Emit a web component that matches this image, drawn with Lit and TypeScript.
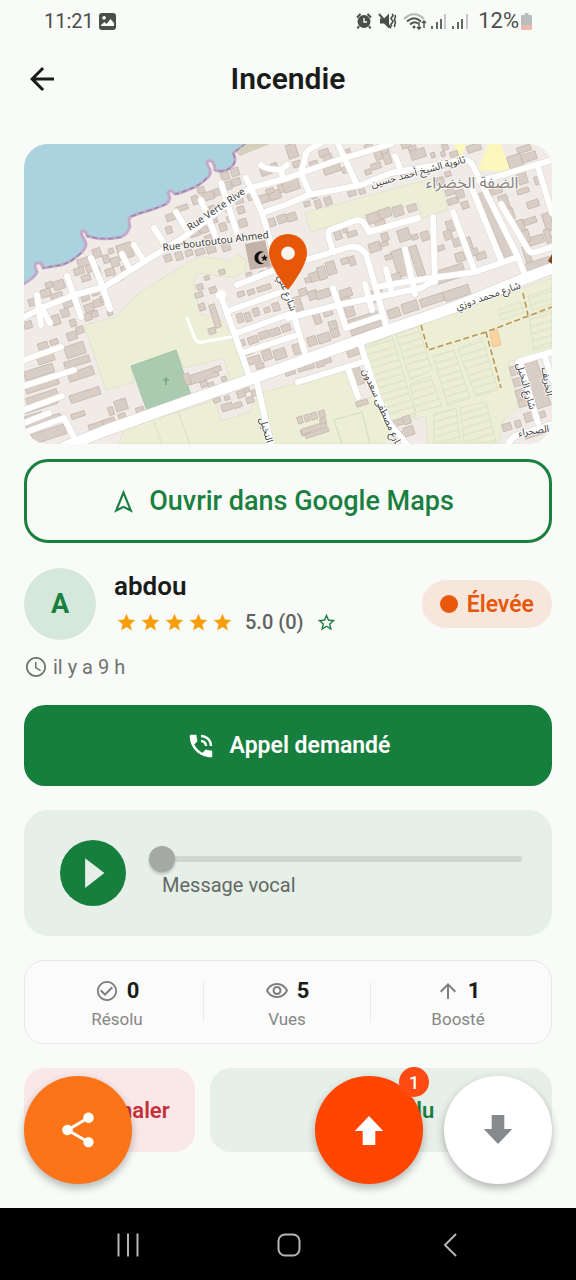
import { LitElement, html, css, svg } from "lit";
import { customElement, property } from "lit/decorators.js";

type Building = [cx: number, cy: number, w: number, h: number];

/* Single buildings: centre and size, all turned to the street grid. */
const buildings: Building[] = [
  // coast blocks
  [147, 73, 10, 7], [145, 86, 6, 7], [158, 64, 12, 5], [171, 56, 6, 9], [177, 46, 7, 6],
  [184, 52, 12, 8], [194, 48, 8, 7], [201, 32, 8, 8], [211, 28, 8, 8], [203, 42, 9, 8],
  [212, 38, 9, 7], [217, 66, 7, 7], [219, 79, 8, 8], [204, 63, 7, 9], [206, 75, 6, 6],
  [187, 66, 8, 7], [190, 75, 6, 8], [199, 83, 7, 8], [188, 64, 5, 5], [157, 98, 9, 5],
  [171, 90, 10, 5], [180, 86, 8, 6], [144, 114, 7, 7], [155, 112, 7, 8], [165, 109, 7, 6],
  [176, 108, 9, 6], [187, 105, 9, 8], [202, 103, 8, 8], [215, 56, 8, 7], [184, 94, 7, 5],
  [242, 27, 11, 8], [250, 21, 6, 4], [227, 51, 8, 10], [239, 55, 12, 8], [251, 51, 11, 9],
  [259, 44, 9, 8], [246, 47, 8, 5], [246, 79, 11, 8], [258, 75, 9, 8], [268, 73, 9, 8],
  [101, 107, 15, 15], [87, 107, 5, 5], [73, 109, 8, 9], [82, 115, 6, 8], [60, 118, 13, 8],
  [55, 127, 10, 7], [66, 124, 8, 8], [73, 128, 7, 9], [62, 134, 9, 6], [91, 118, 8, 9],
  [100, 125, 6, 6], [86, 128, 9, 7], [94, 134, 8, 6], [35, 141, 11, 9], [22, 149, 10, 8],
  [33, 153, 12, 8], [44, 160, 9, 7], [9, 158, 9, 7], [6, 170, 8, 6], [32, 176, 8, 10],
  [41, 169, 8, 8], [65, 164, 9, 8], [74, 159, 9, 7], [64, 173, 7, 7], [71, 170, 6, 6],
  [86, 169, 5, 5], [49, 179, 6, 7], [56, 186, 7, 7], [48, 192, 10, 8], [4, 181, 8, 7],
  [61, 153, 8, 8], [71, 148, 7, 7], [25, 141, 7, 6], [79, 155, 6, 6],
  // western terraces
  [19, 202, 10, 7], [30, 198, 8, 5], [22, 215, 17, 7], [51, 206, 20, 12], [53, 218, 26, 7],
  [57, 230, 26, 9], [61, 251, 31, 8], [54, 271, 14, 5], [15, 228, 30, 9], [18, 241, 34, 8],
  [18, 253, 32, 7], [17, 262, 34, 5], [20, 279, 36, 9], [25, 290, 34, 10], [10, 273, 18, 6],
  [97, 261, 12, 11], [87, 267, 5, 8], [98, 272, 7, 5], [116, 266, 8, 6], [72, 282, 15, 6],
  [85, 278, 12, 7],
  // park side
  [179, 232, 31, 9], [193, 225, 8, 5], [163, 235, 6, 11], [180, 240, 7, 6], [187, 241, 6, 5],
  [200, 235, 5, 5], [175, 151, 8, 5], [178, 163, 6, 7], [188, 187, 7, 6], [191, 172, 6, 24],
  [183, 134, 5, 4], [198, 128, 6, 5], [189, 146, 7, 6], [176, 143, 6, 6],
  [217, 150, 7, 5], [227, 148, 7, 5], [240, 144, 14, 5], [216, 174, 6, 9], [224, 173, 6, 9],
  [232, 168, 6, 8], [252, 163, 7, 8], [243, 166, 6, 5], [218, 199, 6, 6], [229, 196, 10, 7],
  [240, 191, 10, 7], [251, 188, 10, 7], [262, 184, 9, 7], [230, 216, 13, 7], [243, 211, 9, 10],
  [256, 210, 12, 10], [225, 208, 8, 5], [236, 222, 8, 5], [273, 205, 8, 10], [268, 218, 10, 5],
  [193, 256, 7, 5], [203, 263, 11, 7], [214, 261, 8, 5], [217, 250, 8, 7], [226, 256, 7, 6],
  [230, 249, 5, 6], [223, 246, 5, 4], [203, 254, 5, 4],
  [225, 131, 6, 5], [238, 129, 6, 4], [248, 122, 9, 4],
  // northern streets
  [268, 7, 10, 14], [267, 41, 16, 12], [273, 20, 8, 6], [290, 21, 8, 8], [300, 9, 10, 7],
  [304, 15, 9, 9], [308, 25, 17, 8], [321, 26, 6, 6], [323, 8, 7, 5], [294, 60, 6, 8],
  [304, 57, 7, 8], [283, 60, 6, 5], [290, 52, 6, 5], [345, 4, 8, 8], [354, 10, 7, 12],
  [363, 14, 7, 12], [352, 22, 10, 6], [344, 28, 6, 5], [361, 6, 7, 6], [382, 1, 9, 6],
  [394, 10, 15, 9], [388, 4, 8, 4], [409, 11, 4, 5], [419, 10, 4, 5], [421, 3, 6, 6],
  [430, 10, 8, 5], [450, 4, 14, 7], [328, 49, 8, 6], [338, 47, 6, 6], [380, 28, 7, 5],
  [349, 74, 12, 10], [361, 69, 12, 9], [374, 67, 10, 10], [388, 64, 9, 7], [356, 79, 10, 5],
  [314, 91, 7, 9], [328, 90, 10, 5], [321, 86, 5, 5], [361, 93, 7, 8], [380, 91, 12, 12],
  [401, 92, 8, 9], [391, 93, 6, 5], [351, 103, 12, 9], [360, 100, 8, 4], [365, 113, 8, 5],
  [376, 119, 11, 27], [393, 117, 8, 31], [371, 136, 13, 12], [417, 104, 7, 5],
  [290, 133, 9, 9], [298, 129, 8, 13], [307, 124, 9, 13], [321, 117, 8, 6], [328, 117, 6, 9],
  [284, 136, 6, 5], [425, 130, 32, 13], [427, 82, 9, 11], [424, 91, 8, 9], [436, 113, 9, 9],
  [434, 98, 10, 8], [429, 57, 11, 6], [426, 48, 9, 6], [441, 61, 7, 7], [416, 37, 8, 7],
  [424, 30, 6, 5], [444, 99, 7, 11], [457, 112, 10, 7], [450, 108, 8, 7], [436, 50, 8, 8],
  [472, 47, 12, 6], [480, 58, 9, 14], [486, 70, 8, 11], [491, 17, 14, 12],
  [505, 13, 15, 8], [500, 5, 14, 6], [497, 86, 9, 20], [503, 110, 6, 16], [513, 121, 28, 9],
  [498, 33, 9, 14], [499, 47, 12, 5], [509, 60, 12, 7], [515, 36, 9, 8],
  [506, 77, 13, 6], [524, 78, 8, 18], [512, 96, 16, 8], [502, 92, 7, 12], [524, 92, 6, 14],
  [433, 149, 26, 10], [408, 156, 24, 8], [386, 163, 16, 10], [370, 169, 12, 9],
  // south of the mosque
  [273, 160, 9, 14], [289, 151, 9, 9], [299, 150, 14, 8], [279, 148, 8, 7], [293, 174, 7, 12],
  [304, 169, 9, 6], [309, 181, 8, 8], [288, 197, 9, 9], [300, 194, 12, 9], [311, 189, 8, 8],
  [324, 162, 9, 22], [322, 149, 12, 8], [352, 152, 9, 12], [338, 175, 33, 6], [343, 184, 33, 6],
  [354, 144, 7, 8], [329, 208, 12, 8], [304, 216, 6, 6], [296, 219, 8, 8], [286, 222, 8, 6],
  [277, 223, 7, 9], [266, 228, 10, 6], [333, 232, 10, 18], [338, 259, 12, 5],
  [276, 276, 5, 7], [283, 274, 5, 7], [290, 272, 6, 7], [298, 270, 6, 7], [281, 288, 8, 6],
  [290, 284, 26, 5], [293, 289, 24, 4], [299, 277, 6, 5],
  [385, 287, 10, 9], [376, 278, 14, 6], [383, 276, 7, 8], [374, 291, 10, 5],
  [492, 226, 12, 9], [494, 238, 9, 8], [497, 250, 10, 10], [499, 259, 9, 7], [513, 240, 14, 48],
  [483, 283, 9, 7], [494, 280, 6, 7], [505, 273, 9, 9], [517, 271, 9, 6], [511, 289, 22, 6],
];

const minorRoads = [
  "M0 173 L20 163 L50 151 L80 143 L123 116 L160 93 L213 53 L227 44 L264 34 L277 29 L314 16 L367 0",
  "M222 34 L227 44 L238 69 L247 99 L262 146 L281 209",
  "M238 69 L264 60 L284 51 L337 41 L367 29 L441 16 Q446 16 449 22 L494 113 L502 134",
  "M314 0 L332 39", "M296 0 Q280 6 281 14 L277 29 L286 50", "M371 12 L377 27",
  "M429 68 L451 128", "M409 73 L411 138", "M447 42 L477 116", "M455 37 L471 33 L528 16",
  "M477 60 L503 104 Q506 110 512 108 L528 103", "M514 23 L528 69",
  "M394 74 L345 88 L340 79 Q336 75 330 77 L306 86 Q303 88 305 94 L309 108",
  "M270 120 L282 116 L325 103 Q336 101 342 110 L352 145 L362 181",
  "M352 143 L387 137 L451 128 L494 113", "M264 174 L314 161 L397 144 L411 136",
  "M381 105 L391 150", "M362 125 L367 145", "M309 144 L322 184 L357 172", "M341 140 L348 166",
  "M197 152 L225 231 L233 239 L247 300", "M207 166 L263 146", "M213 189 L268 169",
  "M218 209 L270 192", "M213 141 L258 123",
  "M0 216 L37 203", "M0 242 L50 226", "M0 266 L38 252", "M0 279 L25 269", "M2 288 L40 274 L50 293",
  "M13 151 L17 181", "M17 163 L26 179", "M43 132 L57 173", "M67 114 L78 141 L86 165",
  "M98 110 L105 124", "M110 101 L118 114", "M130 84 L141 101", "M152 68 L163 86",
  "M177 56 L192 93", "M197 39 L213 89", "M237 21 Q240 25 257 26 L263 21 M257 26 L259 34",
  "M336 199 L354 253 L366 280 L384 302", "M274 238 L339 218", "M324 224 L334 253",
  "M484 302 Q486 292 498 290 L528 280", "M494 218 L528 208", "M496 218 L514 279", "M521 213 L528 236",
];

const plots = [
  "M338 204 L368 192 L392 272 L362 280 Z",
  "M372 190 L394 183 L408 226 L386 236 Z",
  "M386 240 L406 232 L418 262 L392 268 Z",
  "M409 212 L430 206 L446 254 L424 262 Z",
  "M434 205 L458 194 L474 246 L452 252 Z",
  "M410 270 L432 264 L436 298 L410 298 Z",
  "M436 264 L462 258 L472 298 L440 298 Z",
  "M474 166 L496 158 L500 168 L478 176 Z",
  "M505 172 L528 166 L528 202 L510 206 Z",
  "M504 152 L528 144 L528 160 L508 166 Z",
];

@customElement("area-map")
export class AreaMap extends LitElement {
  static styles = css`
    :host { display: block; height: 300px; border-radius: 24px; overflow: hidden; background: #f2eeea; }
    svg { display: block; width: 100%; height: 100%; }
    .latin { font: 10px "Noto Sans", "DejaVu Sans", sans-serif; fill: #3c3c3c; }
    .arabic { font: 10px "Noto Sans Arabic", "DejaVu Sans", sans-serif; fill: #3c3c3c; }
    .district { font: 16px "Noto Sans Arabic", "DejaVu Sans", sans-serif; fill: #85827f; }
    .halo { paint-order: stroke; stroke: #ffffff; stroke-opacity: 0.7; stroke-width: 2px; }
  `;

  render() {
    return html`
      <svg viewBox="0 0 528 300" preserveAspectRatio="xMidYMid slice" role="img" aria-label="Carte">
        <defs>
          <pattern id="furrow" width="40" height="7" patternUnits="userSpaceOnUse" patternTransform="rotate(-17)">
            <path d="M0 1H40" stroke="#dadec6" stroke-width="1" />
          </pattern>
        </defs>
        <rect width="528" height="300" fill="#f0ebe6" />
        <g fill="#ecefd5" stroke="#dcdfc6" stroke-width=".7">
          <path d="M60 181 L92 173 L115 149 L160 121 Q172 113 183 113 L205 117 L213 110 L222 116 L222 126 L210 134 L173 129 L170 139 L176 170 L197 176 L208 190 L222 232 L206 236 L200 214 L160 224 L152 206 L107 222 L110 238 L82 246 Z" />
          <path d="M95 300 L100 285 L192 256 L197 277 L226 268 L234 250 L324 224 L334 258 L354 250 L384 300 Z" />
          <path d="M336 200 L528 134 L528 206 L484 218 L495 262 L480 276 L474 300 L404 300 L402 272 L364 282 L354 253 Z" />
          <path d="M281 69 L391 39 L416 34 L424 66 L397 74 L394 59 L330 76 L287 88 Z" />
        </g>
        <path d="M454 26 L464 0 L477 0 L487 28 Z M430 0 L442 0 L436 16 Z" fill="#fbf7bd" />
        <path d="M107 222 L152 206 L167 251 L123 267 Z" fill="#aacbaf" stroke="#98bd9f" stroke-width=".7" />
        <path d="M142 233 V241 M139 236 H145" stroke="#7aa386" stroke-width="1.5" />
        <g fill="url(#furrow)" stroke="#dadec6" stroke-width=".8">${plots.map((d) => svg`<path d=${d} />`)}</g>
        <path d="M130 277 L138 300 M154 268 L166 300" fill="none" stroke="#dcdfc6" />
        <path d="M310 276 L338 268 L346 300 M310 276 L318 300" fill="none" stroke="#d5dac0" />
        <path d="M466 189 L473 185 L477 201 L469 203 Z" fill="#fbd4a0" stroke="#eab981" stroke-width=".7" />
        <g fill="#d9cec6" stroke="#c6b8ae" stroke-width=".8">
          ${buildings.map(
            ([x, y, w, h]) =>
              svg`<rect x=${x - w / 2} y=${y - h / 2} width=${w} height=${h} transform="rotate(-18 ${x} ${y})" />`,
          )}
          <path d="M453 50 L461 48 L490 110 L481 114 Z" />
        </g>
        <g fill="none" stroke-linejoin="round" stroke-linecap="round">
          ${minorRoads.map((d) => svg`<path d=${d} stroke="#dcd6d2" stroke-width="7" />`)}
          <path d="M40 303 L83 286 L167 256 L230 234 L336 196 L431 163 L497 136 L532 123" stroke="#d5cfca" stroke-width="12" />
          ${minorRoads.map((d) => svg`<path d=${d} stroke="#ffffff" stroke-width="6" />`)}
          <path d="M163 174 L171 195 Q173 199 178 198 L207 193" stroke="#ffffff" stroke-width="3" />
          <path d="M40 303 L83 286 L167 256 L230 234 L336 196 L431 163 L497 136 L532 123" stroke="#ffffff" stroke-width="11" />
          <circle cx="197" cy="151" r="5" fill="#ffffff" />
        </g>
        <path d="M397 181 L404 206 L462 188 L528 163 M462 188 L477 244 M499 149 L504 171" fill="none" stroke="#bd9552" stroke-width="1.600" stroke-dasharray="6 3" />
        <path
          d="M-4 -4 H222 V0 L209 9 Q214 18 206 24 Q199 29 191 26 Q190 17 187 17 Q181 16 184 22 Q189 29 183 34 Q175 42 166 45 Q154 50 151 50 Q146 44 144 49 Q148 55 142 60 Q136 63 123 67 Q110 71 106 73 Q104 77 106 82 Q104 90 97 93 Q80 97 63 92 Q62 86 58 87 Q56 90 61 97 Q64 102 57 109 Q46 119 37 121 L19 124 Q18 118 13 119 Q9 121 13 128 Q12 133 -4 142 Z"
          fill="#aad3df" stroke="#c3a9cb" stroke-width="3" stroke-linejoin="round"
        />
        <path
          d="M222 0 L209 9 Q214 18 206 24 Q199 29 191 26 M183 34 Q175 42 166 45 Q154 50 151 50 M142 60 Q136 63 123 67 Q110 71 106 73 M97 93 Q80 97 63 92 M57 109 Q46 119 37 121 L19 124"
          fill="none" stroke="#8c85a8" stroke-width="1.200" stroke-dasharray="5 3"
        />
        <path d="M222 0 L212 8 L216 12 L246 0 Z" fill="#d3d0bb" />
        <path d="M221 100 L241 96 L247 122 L226 126 Z" fill="#c3b2a8" />
        <path d="M240 108 A6.5 6.5 0 1 0 240 119.500 A5.500 5.500 0 1 1 240 108 Z" fill="#111" />
        <path d="M240.500 110.500l1 2.200 2.400.3-1.800 1.600.5 2.400-2.100-1.200-2.100 1.200.5-2.400-1.800-1.600 2.400-.3z" fill="#111" />
        <path d="M528 110 L524 117 L528 120 Z" fill="#7a4a1f" />
        <text class="latin halo" transform="translate(166 87) rotate(-34)">Rue Verte Rive</text>
        <text class="latin halo" transform="translate(139 107) rotate(-7)">Rue boutoutou Ahmed</text>
        <text class="arabic halo" text-anchor="middle" transform="translate(395 31) rotate(-15)">ثانوية الشيخ أحمد حسين</text>
        <text class="district halo" text-anchor="middle" x="448" y="44">الضفة الخضراء</text>
        <text class="arabic halo" text-anchor="middle" transform="translate(465 155) rotate(-19)">شارع محمد دوزي</text>
        <text class="arabic halo" text-anchor="middle" transform="translate(260 150) rotate(70)">شارع علي</text>
        <text class="arabic halo" text-anchor="middle" transform="translate(239 287) rotate(74)">النخيل</text>
        <text class="arabic halo" text-anchor="middle" transform="translate(356 267) rotate(66)">شارع مصطفى سعدون</text>
        <text class="arabic halo" text-anchor="middle" transform="translate(499 243) rotate(74)">شارع النخيل</text>
        <text class="arabic halo" text-anchor="middle" transform="translate(520 238) rotate(80)">الخريف</text>
        <text class="arabic halo" text-anchor="middle" transform="translate(510 290) rotate(-8)">الصحراء</text>
        <path
          fill="#e65708"
          d="M264 90c-10.800 0-19 8.400-19 19 0 13.500 19 37 19 37s19-23.500 19-37c0-10.600-8.200-19-19-19z"
        />
        <circle cx="264" cy="109.300" r="6.800" fill="#f8f4f0" />
      </svg>
    `;
  }
}

const icons = {
  back: svg`<path d="M20 11H7.830l5.590-5.590L12 4l-8 8 8 8 1.410-1.410L7.830 13H20z"/>`,
  navigate: svg`<path fill="none" stroke="currentColor" stroke-width="1.900" stroke-linejoin="miter" d="M12 4 5.500 20 12 16.800l6.500 3.200z"/>`,
  star: svg`<path d="M12 17.270 18.180 21l-1.640-7.030L22 9.240l-7.190-.61L12 2 9.190 8.630 2 9.240l5.460 4.730L5.820 21z"/>`,
  starOutline: svg`<path d="m22 9.240-7.190-.62L12 2 9.190 8.630 2 9.240l5.460 4.730L5.820 21 12 17.270 18.180 21l-1.630-7.030zM12 15.400l-3.760 2.270 1-4.280-3.320-2.880 4.380-.38L12 6.100l1.710 4.040 4.380.38-3.320 2.880 1 4.280z"/>`,
  clock: svg`<path d="M11.990 2C6.470 2 2 6.480 2 12s4.470 10 9.990 10C17.520 22 22 17.520 22 12S17.520 2 11.990 2M12 20.300a8.300 8.300 0 1 1 0-16.600 8.300 8.300 0 0 1 0 16.600m.5-13.300H11v6l5.250 3.150.75-1.230-4.500-2.670z"/>`,
  phone: svg`<path d="M20 15.500c-1.250 0-2.450-.2-3.570-.57-.1-.03-.21-.05-.31-.05-.26 0-.51.1-.71.290l-2.200 2.200c-2.830-1.440-5.150-3.750-6.590-6.590l2.200-2.200c.28-.28.36-.67.25-1.020C8.700 6.450 8.500 5.250 8.500 4c0-.55-.45-1-1-1H4c-.55 0-1 .45-1 1 0 9.390 7.610 17 17 17 .55 0 1-.45 1-1v-3.500c0-.55-.45-1-1-1M19 12h2c0-4.970-4.030-9-9-9v2c3.870 0 7 3.130 7 7m-4 0h2c0-2.760-2.240-5-5-5v2c1.660 0 3 1.340 3 3"/>`,
  play: svg`<path d="M7.500 3.500v17l11-8.500z"/>`,
  check: svg`<path d="M16.590 7.580 10 14.170l-3.590-3.580L5 12l5 5 8-8zM12 2C6.480 2 2 6.480 2 12s4.480 10 10 10 10-4.480 10-10S17.520 2 12 2m0 18.300a8.300 8.300 0 1 1 0-16.600 8.300 8.300 0 0 1 0 16.600"/>`,
  eye: svg`<path d="M12 6c3.790 0 7.170 2.130 8.820 5.500C19.170 14.870 15.790 17 12 17s-7.170-2.130-8.820-5.500C4.830 8.130 8.210 6 12 6m0-2C7 4 2.730 7.110 1 11.500 2.730 15.890 7 19 12 19s9.270-3.110 11-7.500C21.270 7.110 17 4 12 4m0 5a2.500 2.500 0 0 1 0 5 2.500 2.500 0 0 1 0-5m0-2c-2.480 0-4.500 2.020-4.500 4.500S9.520 16 12 16s4.500-2.020 4.500-4.500S14.480 7 12 7"/>`,
  up: svg`<path d="m4 12 1.410 1.410L11 7.830V20h2V7.830l5.580 5.590L20 12l-8-8z"/>`,
  flag: svg`<path d="M14.400 6 14 4H5v17h2v-7h5.600l.4 2h7V6z"/>`,
  share: svg`<path d="M18 16.080c-.76 0-1.440.3-1.960.77L8.910 12.700c.05-.23.09-.46.09-.7s-.04-.47-.09-.7l7.050-4.110c.54.5 1.250.81 2.040.81 1.660 0 3-1.340 3-3s-1.340-3-3-3-3 1.340-3 3c0 .24.04.47.09.7L8.040 9.810C7.500 9.310 6.790 9 6 9c-1.660 0-3 1.340-3 3s1.340 3 3 3c.79 0 1.500-.31 2.040-.81l7.120 4.160c-.05.21-.08.43-.08.65 0 1.610 1.310 2.920 2.920 2.920s2.920-1.310 2.920-2.920-1.310-2.920-2.920-2.920"/>`,
  boost: svg`<path d="M12 2.600 2.500 12.600H7.800V22h8.400V12.600H21.500z"/>`,
  lower: svg`<path d="M12 21.400 2.500 11.400H7.800V2h8.400v9.400H21.500z"/>`,
};

@customElement("app-icon")
export class AppIcon extends LitElement {
  @property() name: keyof typeof icons = "back";
  static styles = css`
    :host { display: inline-flex; flex: none; width: 24px; height: 24px; }
    svg { width: 100%; height: 100%; fill: currentColor; }
  `;
  render() {
    return html`<svg viewBox="0 0 24 24" aria-hidden="true">${icons[this.name]}</svg>`;
  }
}

@customElement("status-bar")
export class StatusBar extends LitElement {
  static styles = css`
    :host {
      display: flex; align-items: center; justify-content: space-between;
      height: 42px; padding: 0 44px; color: #4b4e4b; line-height: 24px;
    }
    .side { display: flex; align-items: center; gap: 5px; font-size: 20px; }
    .side.right { gap: 2px; font-size: 22px; }
    svg { display: block; }
  `;
  render() {
    return html`
      <div class="side">
        <span>11:21</span>
        <svg width="17" height="17" viewBox="0 0 17 17">
          <path fill="#4b4e4b" fill-rule="evenodd" d="M3 0h11a3 3 0 0 1 3 3v11a3 3 0 0 1-3 3H3a3 3 0 0 1-3-3V3a3 3 0 0 1 3-3zM2 13h13v-3l-3.500-4-4 5-2-2L2 12zM5 3a1.800 1.800 0 1 0 .1 0z" />
        </svg>
      </div>
      <div class="side right">
        <svg width="120" height="20" viewBox="2 0 120 20" fill="none" stroke="#4b4e4b">
          <circle cx="10" cy="10.500" r="6.500" fill="#4b4e4b" stroke="none" />
          <path d="M3 6.500 6.500 3M13.500 3l3.500 3.500M5 15l-1.500 2.500M15 15l1.500 2.500" stroke-width="2" />
          <path d="M10 7v4h3" stroke="#f8faf7" stroke-width="1.400" />
          <path d="M26 7.500h4l5-5v15l-5-5h-4z" fill="#4b4e4b" stroke="none" />
          <path d="M25 3 37 17" stroke-width="2" />
          <path d="M38 3q2 1.500 0 3t0 3 0 3 0 3M41 4q1 1.500 0 3t0 3 0 3 0 3" stroke-width="1.600" />
          <path d="M50 8Q60-1.500 70 8" stroke="#b5b7b5" stroke-width="2" />
          <path d="M53 10.500Q60 4 67 10.500M56 13.500Q60 9.500 64 12.500" stroke-width="1.900" />
          <circle cx="60" cy="16" r="1.500" fill="#4b4e4b" stroke="none" />
          <path d="M65 11v7M63 16l2 2 2-2M70 17v-7M68 12l2-2 2 2" stroke-width="1.400" />
          <path d="M78 15v3M83 11v7M87 8v10M99 15v3M104 11v7M108 8v10" stroke-width="1.700" />
          <path d="M91 3v15M113 3v15" stroke="#b5b7b5" stroke-width="1.500" />
        </svg>
        <span>12%</span>
        <svg width="11" height="17" viewBox="0 0 11 17">
          <path fill="#bcbebd" d="M3.500 0h4v2H10a1 1 0 0 1 1 1v9H0V3a1 1 0 0 1 1-1h2.500z" />
          <path fill="#efb9b2" d="M0 12h11v3.500a1.500 1.500 0 0 1-1.500 1.500h-8A1.500 1.500 0 0 1 0 15.500z" />
        </svg>
      </div>
    `;
  }
}

@customElement("app-root")
export class AppRoot extends LitElement {
  static styles = css`
    :host {
      display: flex; flex-direction: column; min-height: 100vh; box-sizing: border-box;
      background: #f8fbf8; color: #1a1c1a; font-family: Roboto, sans-serif;
    }
    * { box-sizing: border-box; }
    button { font-family: inherit; border: 0; padding: 0; margin: 0; background: none; color: inherit; cursor: pointer; }
    h1, h2 { margin: 0; }

    .appbar { display: grid; grid-template-columns: 36px 1fr 36px; align-items: center; height: 74px; padding: 0 24px; }
    .appbar h1 { font-size: 30px; line-height: 36px; font-weight: 600; text-align: center; }
    .back { display: flex; }
    .back app-icon { width: 36px; height: 36px; }

    .screen { flex: 1; display: flex; flex-direction: column; position: relative; }
    main { display: flex; flex-direction: column; padding: 28px 24px 56px; }

    .maps {
      display: flex; align-items: center; justify-content: center; gap: 12px; height: 84px; margin-top: 15px; padding-right: 12px;
      border: 3px solid #1b7f40; border-radius: 24px; color: #1b7f40; font-size: 27px; font-weight: 500;
    }
    .maps app-icon { width: 27px; height: 27px; }

    .reporter { display: flex; align-items: center; gap: 18px; margin-top: 25px; }
    .avatar {
      display: grid; place-items: center; flex: none; width: 72px; height: 72px; border-radius: 50%;
      background: #d5e8db; color: #1b7f40; font-size: 27px; font-weight: 700;
    }
    .who { flex: 1; min-width: 0; }
    .who h2 { font-size: 26px; line-height: 36px; font-weight: 600; }
    .rating { display: flex; align-items: center; height: 36px; gap: 12px; padding-left: 2px; color: #5f635f; font-size: 20px; font-weight: 500; }
    .stars { display: flex; gap: 3px; color: #f59e0b; }
    .stars app-icon, .rate app-icon { width: 21px; height: 21px; }
    .rate { display: flex; color: #1b7f40; }
    .level {
      display: flex; align-items: center; gap: 9px; height: 48px; padding: 0 18px; border-radius: 24px;
      background: #f7e6dc; color: #e65708; font-size: 23px; font-weight: 600;
    }
    .dot { width: 18px; height: 18px; border-radius: 50%; background: #e8590c; }
    .when { display: flex; align-items: center; gap: 5px; height: 24px; margin-top: 15px; color: #6f736f; font-size: 20px; }

    .call {
      display: flex; align-items: center; justify-content: center; gap: 14px; height: 81px; margin-top: 26px;
      border-radius: 21px; background: #177f3d; color: #ffffff; font-size: 23px; font-weight: 600;
    }
    .call app-icon { width: 30px; height: 30px; }

    .voice { display: flex; align-items: center; gap: 23px; height: 126px; margin-top: 24px; padding: 0 30px 0 36px; border-radius: 24px; background: #e6efe8; }
    .play { display: grid; place-items: center; flex: none; width: 66px; height: 66px; border-radius: 50%; background: #177f3d; color: #e6efe8; }
    .play app-icon { width: 42px; height: 42px; }
    .track { flex: 1; min-width: 0; display: flex; flex-direction: column; padding-bottom: 2px; }
    .track label { padding-left: 13px; color: #646964; font-size: 20px; line-height: 26px; }
    .track input { appearance: none; width: 100%; height: 26px; margin: 0; background: none; }
    .track input::-webkit-slider-runnable-track { height: 6px; border-radius: 3px; background: linear-gradient(to right, transparent 13px, #cfd7d0 13px); }
    .track input::-webkit-slider-thumb {
      appearance: none; width: 26px; height: 26px; margin-top: -10px; border-radius: 50%; background: #a5a8a4;
      box-shadow: 0 2px 3px rgba(0, 0, 0, 0.22);
    }

    .stats {
      display: flex; align-items: center; justify-content: space-around; height: 84px; margin-top: 24px; padding: 0 36px;
      border: 1px solid #e7eae7; border-radius: 20px; background: #fafbfa;
    }
    .stat { display: flex; flex-direction: column; align-items: center; gap: 2px; padding-top: 4px; }
    .count { display: flex; align-items: center; gap: 8px; font-size: 22px; line-height: 28px; font-weight: 700; }
    .count app-icon { color: #7b7e7b; }
    .caption { color: #858885; font-size: 17px; line-height: 24px; }
    .rule { width: 1px; height: 40px; background: #e9ebe9; }

    .actions { display: grid; grid-template-columns: 1fr 2fr; gap: 15px; margin-top: 24px; }
    .action { display: flex; align-items: center; justify-content: center; gap: 12px; height: 84px; border-radius: 21px; font-size: 22px; font-weight: 600; white-space: nowrap; }
    .action app-icon { width: 27px; height: 27px; }
    .report { background: #f9e8e7; color: #c62f38; }
    .solved { background: #e6efe8; color: #177f3d; }

    .floating { position: absolute; left: 24px; right: 24px; bottom: 24px; display: flex; gap: 21px; }
    .fab {
      position: relative; display: grid; place-items: center; width: 108px; height: 108px; border-radius: 50%;
      box-shadow: 0 4px 8px rgba(0, 0, 0, 0.28);
    }
    .fab app-icon { width: 36px; height: 36px; }
    .share { margin-right: auto; background: #fb7418; color: #ffffff; }
    .share app-icon { width: 42px; height: 42px; }
    .boost { background: #ff4500; color: #ffffff; }
    .lower { background: #ffffff; color: #878a8c; }
    .badge {
      position: absolute; top: -9px; right: -6px; display: grid; place-items: center; width: 30px; height: 30px;
      border-radius: 50%; background: #fb4b12; color: #ffffff; font-size: 18px; font-weight: 500;
    }

    .system { display: grid; grid-template-columns: repeat(3, 1fr); height: 72px; padding: 2px 46px 0 48px; background: #000000; color: #b5b5b5; }
    .system button { display: grid; place-items: center; }
    .system svg { width: 26px; height: 26px; fill: none; stroke: currentColor; stroke-width: 2; }
  `;

  private stat(icon: string, count: number, caption: string) {
    return html`
      <div class="stat">
        <div class="count"><app-icon name=${icon}></app-icon><span>${count}</span></div>
        <span class="caption">${caption}</span>
      </div>
    `;
  }

  render() {
    return html`
      <status-bar></status-bar>
      <header class="appbar">
        <button class="back" aria-label="Retour"><app-icon name="back"></app-icon></button>
        <h1>Incendie</h1>
      </header>
      <div class="screen">
        <main>
          <area-map></area-map>
          <button class="maps"><app-icon name="navigate"></app-icon>Ouvrir dans Google Maps</button>

          <section class="reporter">
            <div class="avatar">A</div>
            <div class="who">
              <h2>abdou</h2>
              <div class="rating">
                <div class="stars">${[1, 2, 3, 4, 5].map(() => html`<app-icon name="star"></app-icon>`)}</div>
                <span>5.0 (0)</span>
                <button class="rate" aria-label="Noter"><app-icon name="starOutline"></app-icon></button>
              </div>
            </div>
            <div class="level"><span class="dot"></span>Élevée</div>
          </section>
          <div class="when"><app-icon name="clock"></app-icon><span>il y a 9 h</span></div>

          <button class="call"><app-icon name="phone"></app-icon>Appel demandé</button>

          <section class="voice">
            <button class="play" aria-label="Lire"><app-icon name="play"></app-icon></button>
            <div class="track">
              <input id="position" type="range" min="0" max="100" .value=${"0"} />
              <label for="position">Message vocal</label>
            </div>
          </section>

          <section class="stats">
            ${this.stat("check", 0, "Résolu")}
            <span class="rule"></span>
            ${this.stat("eye", 5, "Vues")}
            <span class="rule"></span>
            ${this.stat("up", 1, "Boosté")}
          </section>

          <div class="actions">
            <button class="action report"><app-icon name="flag"></app-icon>Signaler</button>
            <button class="action solved"><app-icon name="check"></app-icon>Résolu</button>
          </div>
        </main>
        <div class="floating">
          <button class="fab share" aria-label="Partager"><app-icon name="share"></app-icon></button>
          <button class="fab boost" aria-label="Booster">
            <app-icon name="boost"></app-icon>
            <span class="badge">1</span>
          </button>
          <button class="fab lower" aria-label="Rétrograder"><app-icon name="lower"></app-icon></button>
        </div>
      </div>
      <nav class="system">
        <button aria-label="Récents"><svg viewBox="0 0 26 26"><path d="M3.500 1.500v23M13 1.500v23M22.500 1.500v23" /></svg></button>
        <button aria-label="Accueil"><svg viewBox="0 0 26 26"><rect x="2.500" y="2.500" width="21" height="21" rx="6.500" /></svg></button>
        <button aria-label="Précédent"><svg viewBox="0 0 26 26"><path d="M19 2 8 13l11 11" /></svg></button>
      </nav>
    `;
  }
}
